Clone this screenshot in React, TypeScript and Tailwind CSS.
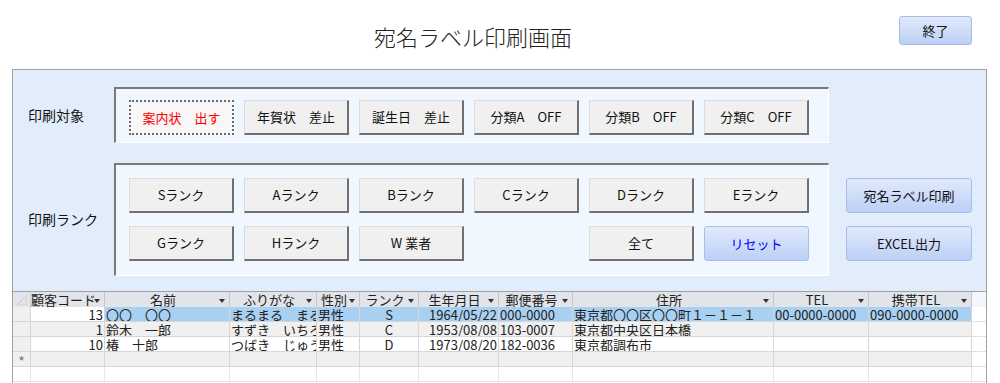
import React from "react";

const FONT = { fontFamily: '"Noto Sans CJK JP", "Noto Sans", sans-serif' };

function GrayBtn({ children, className = "" }: { children?: React.ReactNode; className?: string }) {
  return (
    <div className={"flex items-center justify-center h-[35px] w-[105px] bg-[#f0f0f0] border-t border-l border-t-[#dcdcdc] border-l-[#dcdcdc] border-r-2 border-b-2 border-r-[#707070] border-b-[#707070] text-[13px] text-[#111] " + className}>
      {children}
    </div>
  );
}

function BlueBtn({ children, className = "", w = "w-[105px]", h = "h-[35px]" }: { children?: React.ReactNode; className?: string; w?: string; h?: string }) {
  return (
    <div className={`flex items-center justify-center ${w} ${h} rounded-[3px] border border-[#a7bde6] bg-gradient-to-b from-[#e1eafc] to-[#bccff5] text-[13px] ${className}`}>
      {children}
    </div>
  );
}

function Arrow() {
  return (
    <svg width="6" height="4" viewBox="0 0 6 4" className="absolute right-[4px] top-[7px]">
      <polygon points="0,0 6,0 3,4" fill="#333" />
    </svg>
  );
}

type Col = { key: string; label: string; w: number; align: "left" | "right" | "center" };
const cols: Col[] = [
  { key: "code", label: "顧客コード", w: 74, align: "right" },
  { key: "name", label: "名前", w: 125, align: "left" },
  { key: "kana", label: "ふりがな", w: 87, align: "left" },
  { key: "sex", label: "性別", w: 43, align: "left" },
  { key: "rank", label: "ランク", w: 59, align: "center" },
  { key: "birth", label: "生年月日", w: 80, align: "right" },
  { key: "zip", label: "郵便番号", w: 74, align: "left" },
  { key: "addr", label: "住所", w: 201, align: "left" },
  { key: "tel", label: "TEL", w: 95, align: "left" },
  { key: "mobile", label: "携帯TEL", w: 103, align: "left" },
];

const rows: Record<string, string>[] = [
  { code: "13", name: "〇〇　〇〇", kana: "まるまる　まるまる", sex: "男性", rank: "S", birth: "1964/05/22", zip: "000-0000", addr: "東京都〇〇区〇〇町１－１－１", tel: "00-0000-0000", mobile: "090-0000-0000" },
  { code: "1", name: "鈴木　一郎", kana: "すずき　いちろう", sex: "男性", rank: "C", birth: "1953/08/08", zip: "103-0007", addr: "東京都中央区日本橋", tel: "", mobile: "" },
  { code: "10", name: "椿　十郎", kana: "つばき　じゅうろう", sex: "男性", rank: "D", birth: "1973/08/20", zip: "182-0036", addr: "東京都調布市", tel: "", mobile: "" },
];

export default function App() {
  const rank1 = ["Sランク", "Aランク", "Bランク", "Cランク", "Dランク", "Eランク"];
  return (
    <div className="w-[1000px] h-[383px] bg-white overflow-hidden text-[#111]" style={FONT}>
      {/* title row */}
      <div className="flex h-[69px]">
        <div className="pl-[374px] pt-[21px] text-[22px] leading-[30px] text-[#222] font-light">宛名ラベル印刷画面</div>
        <div className="ml-auto mr-[28px] mt-[16px]">
          <BlueBtn w="w-[73px]" h="h-[29px]">終了</BlueBtn>
        </div>
      </div>

      {/* panel */}
      <div className="ml-[12px] w-[975px] h-[222px] bg-[#e2edfc] border-t border-l border-r border-[#a0a0a0] pt-[17px]">
        <div className="flex">
          <div className="w-[101px] pl-[15px] flex items-center text-[14px]">印刷対象</div>
          <div className="w-[715px] h-[56px] bg-[#f1f7fe] border-t-2 border-l-2 border-t-[#7a7a7a] border-l-[#7a7a7a] border-b border-r border-b-white border-r-white pl-[13px] pt-[11px] flex gap-[10px]">
            <div className="flex items-center justify-center h-[35px] w-[105px] bg-[#f7f7f7] border-2 border-dotted border-[#6a6a6a] text-[13px] text-[#ff0000]">案内状　出す</div>
            <GrayBtn>年賀状　差止</GrayBtn>
            <GrayBtn>誕生日　差止</GrayBtn>
            <GrayBtn>分類A　OFF</GrayBtn>
            <GrayBtn>分類B　OFF</GrayBtn>
            <GrayBtn>分類C　OFF</GrayBtn>
          </div>
        </div>
        <div className="flex mt-[20px]">
          <div className="w-[101px] pl-[15px] flex items-center text-[14px]">印刷ランク</div>
          <div className="w-[715px] h-[113px] bg-[#f1f7fe] border-t-2 border-l-2 border-t-[#7a7a7a] border-l-[#7a7a7a] border-b border-r border-b-white border-r-white pl-[13px] pt-[13px] grid grid-cols-[repeat(6,105px)] grid-rows-[35px_35px] gap-x-[10px] gap-y-[13px]">
            {rank1.map((r) => (
              <GrayBtn key={r}>{r}</GrayBtn>
            ))}
            <GrayBtn>Gランク</GrayBtn>
            <GrayBtn>Hランク</GrayBtn>
            <GrayBtn>W 業者</GrayBtn>
            <div />
            <GrayBtn>全て</GrayBtn>
            <BlueBtn className="text-[#0000ff]">リセット</BlueBtn>
          </div>
          <div className="ml-[17px] pt-[15px] flex flex-col gap-[13px]">
            <BlueBtn w="w-[126px]">宛名ラベル印刷</BlueBtn>
            <BlueBtn w="w-[126px]">EXCEL出力</BlueBtn>
          </div>
        </div>
      </div>

      {/* datasheet */}
      <div className="ml-[12px] w-[975px] border-l border-r border-[#a0a0a0] bg-white text-[13px] leading-[15px]">
        {/* header */}
        <div className="flex h-[16px] bg-[#e1e4e9] border-t border-[#a0a0a0]">
          <div className="w-[18px] border-r border-[#cfd3d8] relative">
            <svg width="10" height="10" viewBox="0 0 10 10" className="absolute left-[4px] top-[3px]">
              <polygon points="10,0 10,10 0,10" fill="none" stroke="#c8ccd2" />
            </svg>
          </div>
          {cols.map((c) => (
            <div key={c.key} style={{ width: c.w }} className="relative border-r border-[#c4c8ce] text-center text-[#222] whitespace-nowrap pr-[8px]">
              {c.label}
              <Arrow />
            </div>
          ))}
          <div className="flex-1 bg-[#f4f6fb]" />
        </div>
        {rows.map((r, i) => {
          const bg = i === 0 ? "bg-[#a7d0f2]" : i === 1 ? "bg-[#f0f0f0]" : "bg-white";
          return (
            <div key={i} className="flex h-[15px]">
              <div className="w-[18px] bg-[#f0f0f0] border-r border-b border-[#d6d6d6]" />
              {cols.map((c, ci) => (
                <div
                  key={c.key}
                  style={{ width: c.w, textAlign: c.align }}
                  className={`${i === 0 && ci === 0 ? "bg-white" : bg} border-r border-b border-[#d6d6d6] overflow-hidden whitespace-nowrap px-[1px] text-[#222]`}
                >
                  {r[c.key]}
                </div>
              ))}
              <div className="flex-1 border-b border-[#e2e2e2]" />
            </div>
          );
        })}
        <div className="flex h-[15px]">
          <div className="w-[18px] bg-[#f0f0f0] border-r border-b border-[#d6d6d6] text-[14px] leading-[18px] text-center text-[#777]">*</div>
          {cols.map((c) => (
            <div key={c.key} style={{ width: c.w }} className="bg-[#f0f0f0] border-r border-b border-[#d6d6d6]" />
          ))}
          <div className="flex-1 border-b border-[#e2e2e2]" />
        </div>
        <div className="flex h-[15px]">
          <div className="w-[18px] border-r border-b border-[#e6e6e6]" />
          {cols.map((c) => (
            <div key={c.key} style={{ width: c.w }} className="border-r border-b border-[#e6e6e6]" />
          ))}
          <div className="flex-1 border-b border-[#e6e6e6]" />
        </div>
        <div className="flex h-[15px]">
          <div className="w-[18px] border-r border-[#e6e6e6]" />
          {cols.map((c) => (
            <div key={c.key} style={{ width: c.w }} className="border-r border-[#e6e6e6]" />
          ))}
        </div>
      </div>
    </div>
  );
}
